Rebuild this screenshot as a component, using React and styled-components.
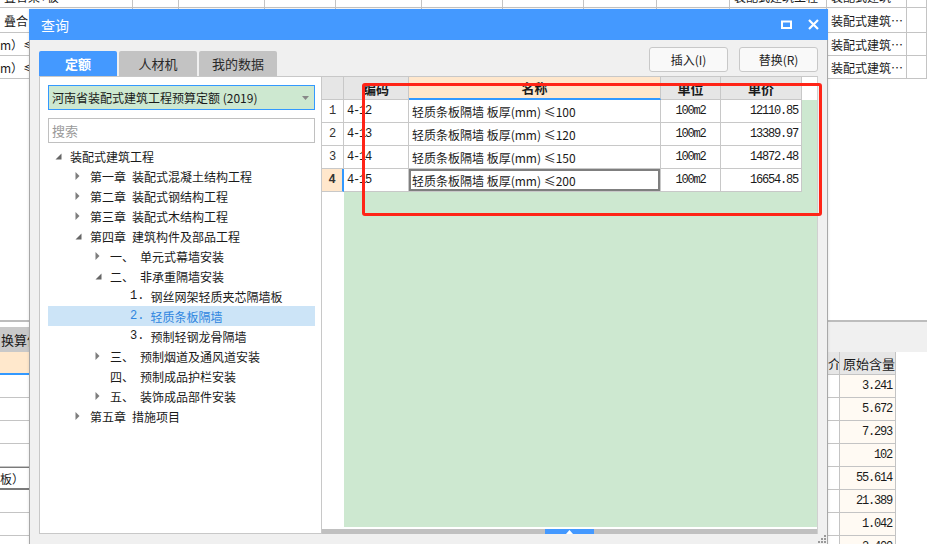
import React from 'react';
import styled, { createGlobalStyle, css } from 'styled-components';

const CJK = `"Noto Sans CJK SC", "Liberation Sans", sans-serif`;
const MONO = `"Liberation Mono", "Noto Sans CJK SC", monospace`;

const GlobalStyle = createGlobalStyle`
  html, body {
    margin: 0;
    padding: 0;
    overflow: hidden;
    background: #fff;
  }
  body {
    font-family: ${CJK};
    font-size: 12px;
    color: #1a1a1a;
  }
  * {
    box-sizing: border-box;
  }
`;

// half-width digits in the source look like a narrow bitmap mono face
const monoText = css`
  font-family: ${MONO};
  font-size: 12px;
  letter-spacing: -1.2px;
`;

const Page = styled.div`
  position: relative;
  width: 927px;
  height: 544px;
  overflow: hidden;
  background: #fff;
  display: flex;
  flex-direction: column;
`;

/* ---------- background sheet ---------- */

const Sheet = styled.div`
  margin-top: -15px;
  display: flex;
  flex-direction: column;
`;

const SheetRow = styled.div`
  display: flex;
  height: ${p => p.$h}px;
  border-bottom: 1px solid #c4c4c4;
`;

const SheetCell = styled.div`
  width: ${p => p.$w}px;
  flex: none;
  border-right: 1px solid #c4c4c4;
  padding: 0 ${p => (p.$pad === undefined ? 3 : p.$pad)}px;
  display: flex;
  align-items: center;
  justify-content: ${p => (p.$right ? 'flex-end' : 'flex-start')};
  white-space: nowrap;
  overflow: hidden;
  ${p => p.$mono && monoText}
`;

const Bottom = styled.div`
  margin-top: auto;
  height: 224px;
  display: flex;
  justify-content: space-between;
`;

const LeftPane = styled.div`
  width: 160px;
  border-top: 2px solid #bdbdbd;
  padding-top: 5px;
  display: flex;
  flex-direction: column;
`;

const PaneHead = styled.div`
  height: 25px;
  background: #c9c9c9;
  display: flex;
  align-items: center;
  padding-left: 1px;
  font-size: 13px;
  white-space: nowrap;
`;

const PaneRow = styled.div`
  height: ${p => p.$h || 23}px;
  flex: none;
  display: flex;
  align-items: center;
  white-space: nowrap;
  font-size: 12px;
  background: ${p => (p.$current ? '#ffe8cc' : '#fff')};
  border-bottom: ${p =>
    p.$current ? '2px solid #3399ff' : p.$focus ? '2px solid #7a7a7a' : '1px solid #c4c4c4'};
  ${p => p.$focus && css`border-top: 1px solid #7a7a7a;`}
`;

const RightPane = styled.div`
  width: 99px;
  border-top: 2px solid #bdbdbd;
  display: flex;
  flex-direction: column;
`;

const PaneTools = styled.div`
  height: 30px;
  flex: none;
  background: #f0f0f0;
`;

const ValueRow = styled.div`
  display: flex;
  height: 23px;
  flex: none;
`;

const ValueCell = styled.div`
  width: ${p => p.$w}px;
  flex: none;
  display: flex;
  align-items: center;
  justify-content: ${p => (p.$right ? 'flex-end' : 'flex-start')};
  padding: 0 3px;
  white-space: nowrap;
  overflow: hidden;
  background: ${p => (p.$head ? '#e6e6e6' : p.$cream ? '#fffaf3' : '#fff')};
  border-right: 1px solid #c4c4c4;
  border-bottom: 1px solid #c4c4c4;
  font-size: ${p => (p.$head ? 13 : 12)}px;
  ${p => p.$mono && monoText}
`;

/* ---------- dialog ---------- */

const Dialog = styled.div`
  position: absolute;
  left: 29px;
  top: 9px;
  width: 799px;
  height: 537px;
  background: #f0f0f0;
  border: 1px solid #a8a8a8;
  border-top: none;
  display: flex;
  flex-direction: column;
  box-shadow: 0 0 3px rgba(0, 0, 0, 0.12);
`;

const TitleBar = styled.div`
  height: 31px;
  flex: none;
  margin: 0 -1px;
  background: #4499ff;
  color: #fff;
  display: flex;
  align-items: center;
  justify-content: space-between;
  padding: 0 9px 0 12px;
  font-size: 14px;
`;

const TitleTools = styled.div`
  display: flex;
  align-items: center;
  gap: 16px;
`;

const DialogBody = styled.div`
  flex: 1;
  display: flex;
  flex-direction: column;
  padding: 7px 9px 0 9px;
`;

const TopRow = styled.div`
  height: 29px;
  flex: none;
  display: flex;
  justify-content: space-between;
`;

const Tabs = styled.div`
  display: flex;
  align-self: flex-end;
  gap: 2px;
`;

const Tab = styled.div`
  width: 78px;
  height: 25px;
  display: flex;
  align-items: center;
  justify-content: center;
  border-radius: 2px 2px 0 0;
  font-size: 13px;
  background: ${p => (p.$active ? '#4499ff' : '#c3c3c3')};
  color: ${p => (p.$active ? '#fff' : '#2a2a2a')};
  font-weight: ${p => (p.$active ? 'bold' : 'normal')};
`;

const Actions = styled.div`
  display: flex;
  gap: 11px;
`;

const ActionButton = styled.button`
  width: 79px;
  height: 25px;
  padding: 0;
  border: 1px solid #c8c8c8;
  border-radius: 3px;
  background: #f9f9f9;
  color: #222;
  font-family: ${CJK};
  font-size: 12px;
`;

const Content = styled.div`
  height: 458px;
  flex: none;
  display: flex;
`;

const TreePanel = styled.div`
  width: 283px;
  flex: none;
  background: #fff;
  border: 1px solid #c8c8c8;
  padding: 8px 6px 0 8px;
  display: flex;
  flex-direction: column;
`;

const Select = styled.div`
  height: 25px;
  border: 1px solid #3399ff;
  background: #cde8d0;
  display: flex;
  align-items: center;
  justify-content: space-between;
  padding: 0 5px 0 3px;
  white-space: nowrap;
  font-size: 12px;
`;

const Search = styled.div`
  margin-top: 8px;
  height: 25px;
  border: 1px solid #c0c0c0;
  background: #fff;
  display: flex;
  align-items: center;
  padding-left: 3px;
  color: #9a9a9a;
  font-size: 13px;
`;

const Tree = styled.div`
  margin-top: 3px;
  display: flex;
  flex-direction: column;
`;

const TreeRow = styled.div`
  height: 20px;
  display: flex;
  align-items: center;
  padding-left: ${p => 6 + p.$level * 20}px;
  white-space: nowrap;
  font-size: 12px;
  background: ${p => (p.$selected ? '#cce4f7' : 'transparent')};
  color: ${p => (p.$selected ? '#2f86e0' : '#1a1a1a')};
`;

const Toggle = styled.span`
  width: 16px;
  flex: none;
  display: flex;
  align-items: center;
  padding-left: 1px;
`;

const Prefix = styled.span`
  margin-right: 6px;
  ${p => p.$mono && css`
    font-family: ${MONO};
    font-size: 12px;
  `}
`;

const Grid = styled.div`
  width: 496px;
  flex: none;
  background: #fff;
  border-top: 1px solid #c8c8c8;
  border-right: 1px solid #d0d0d0;
  display: flex;
  flex-direction: column;
`;

const GridRow = styled.div`
  display: flex;
  height: 23px;
  flex: none;
`;

const HeadCell = styled.div`
  width: ${p => p.$w}px;
  flex: none;
  display: flex;
  align-items: center;
  justify-content: center;
  font-weight: bold;
  font-size: 13px;
  background: ${p => (p.$active ? '#ffe7cc' : '#e6e6e6')};
  border-right: 1px solid #c8c8c8;
  border-bottom: ${p => (p.$active ? '2px solid #3399ff' : '1px solid #c8c8c8')};
`;

const HeadFiller = styled.div`
  flex: 1;
  background: #fff;
`;

const RowNo = styled.div`
  width: 22px;
  flex: none;
  display: flex;
  align-items: center;
  justify-content: center;
  ${monoText}
  letter-spacing: 0;
  color: #333;
  background: ${p => (p.$current ? '#ffe7cc' : '#fff')};
  font-weight: ${p => (p.$current ? 'bold' : 'normal')};
  border-bottom: 1px solid #c8c8c8;
  border-right: ${p => (p.$current ? '2px solid #3399ff' : '1px solid #c8c8c8')};
`;

const Cell = styled.div`
  width: ${p => p.$w}px;
  flex: none;
  display: flex;
  align-items: center;
  justify-content: ${p =>
    p.$align === 'right' ? 'flex-end' : p.$align === 'center' ? 'center' : 'flex-start'};
  padding: 0 3px;
  white-space: nowrap;
  overflow: hidden;
  background: #fff;
  border-right: 1px solid #c8c8c8;
  border-bottom: 1px solid #c8c8c8;
  font-size: 12px;
  ${p => p.$mono && monoText}
  ${p => p.$selected && css`box-shadow: inset 0 0 0 2px #7f7f7f;`}
`;

const GreenFiller = styled.div`
  flex: 1;
  background: #cde8d0;
`;

const GridFill = styled.div`
  flex: 1;
  display: flex;
`;

const RowNoFill = styled.div`
  width: 22px;
  flex: none;
  background: #fff;
`;

const ScrollGap = styled.div`
  height: 2px;
  flex: none;
  background: #fff;
`;

const ScrollBar = styled.div`
  height: 5px;
  flex: none;
  background: #c0c0c0;
  display: flex;
  padding-left: 223px;
`;

const ScrollThumb = styled.div`
  width: 49px;
  height: 5px;
  background: #4499ff;
  display: flex;
  align-items: center;
  justify-content: center;
`;

const Grip = styled.svg`
  position: absolute;
  right: 1px;
  bottom: 2px;
`;

const RedMark = styled.div`
  position: absolute;
  left: 362px;
  top: 83px;
  width: 460px;
  height: 133px;
  border: 3px solid #ff2417;
  border-radius: 3px;
  pointer-events: none;
`;

/* ---------- data ---------- */

const sheetCols = [133, 46, 86, 71, 86, 81, 81, 73, 73, 97, 80, 20];

const sheetRows = [
  {
    h: 23,
    cells: ['叠合梁+板', '10m3', '', '', '0', '1310.41', '0', '1143.4', '0', '装配式建筑工程', '装配式建筑', ''],
  },
  { h: 25, cells: ['叠合', '', '', '', '', '', '', '', '', '', '装配式建筑…', ''] },
  { h: 23, cells: ['m）≤', '', '', '', '', '', '', '', '', '', '装配式建筑…', ''] },
  { h: 23, cells: ['m）≤', '', '', '', '', '', '', '', '', '', '装配式建筑…', ''] },
];

const numeric = v => /^[0-9.m]+$/.test(v);

const tree = [
  { level: 0, toggle: 'open', text: '装配式建筑工程' },
  { level: 1, toggle: 'closed', prefix: '第一章', text: '装配式混凝土结构工程' },
  { level: 1, toggle: 'closed', prefix: '第二章', text: '装配式钢结构工程' },
  { level: 1, toggle: 'closed', prefix: '第三章', text: '装配式木结构工程' },
  { level: 1, toggle: 'open', prefix: '第四章', text: '建筑构件及部品工程' },
  { level: 2, toggle: 'closed', prefix: '一、', text: '单元式幕墙安装' },
  { level: 2, toggle: 'open', prefix: '二、', text: '非承重隔墙安装' },
  { level: 3, prefix: '1.', num: true, text: '钢丝网架轻质夹芯隔墙板' },
  { level: 3, prefix: '2.', num: true, text: '轻质条板隔墙', selected: true },
  { level: 3, prefix: '3.', num: true, text: '预制轻钢龙骨隔墙' },
  { level: 2, toggle: 'closed', prefix: '三、', text: '预制烟道及通风道安装' },
  { level: 2, prefix: '四、', text: '预制成品护栏安装' },
  { level: 2, toggle: 'closed', prefix: '五、', text: '装饰成品部件安装' },
  { level: 1, toggle: 'closed', prefix: '第五章', text: '措施项目' },
];

const gridCols = [
  { key: 'code', title: '编码', w: 65, mono: true },
  { key: 'name', title: '名称', w: 252, active: true },
  { key: 'unit', title: '单位', w: 60, mono: true, align: 'center' },
  { key: 'price', title: '单价', w: 81, mono: true, align: 'right' },
];

const quotas = [
  { no: 1, code: '4-12', name: '轻质条板隔墙\u00a0板厚(mm)\u00a0≤100', unit: '100m2', price: '12110.85' },
  { no: 2, code: '4-13', name: '轻质条板隔墙\u00a0板厚(mm)\u00a0≤120', unit: '100m2', price: '13389.97' },
  { no: 3, code: '4-14', name: '轻质条板隔墙\u00a0板厚(mm)\u00a0≤150', unit: '100m2', price: '14872.48' },
  { no: 4, code: '4-15', name: '轻质条板隔墙\u00a0板厚(mm)\u00a0≤200', unit: '100m2', price: '16654.85', current: true },
];

const amounts = ['3.241', '5.672', '7.293', '102', '55.614', '21.389', '1.042', '2.400'];

/* ---------- icons ---------- */

const OpenArrow = () => (
  <svg width="7" height="7" viewBox="0 0 7 7">
    <path d="M6.5 0.5 V6.5 H0.5 Z" fill="#666" />
  </svg>
);

const ClosedArrow = () => (
  <svg width="5" height="8" viewBox="0 0 5 8">
    <path d="M0.5 0 L4.5 4 L0.5 8 Z" fill="#7d7d7d" />
  </svg>
);

const MaxIcon = () => (
  <svg width="11" height="9" viewBox="0 0 11 9">
    <rect x="1" y="1.5" width="9" height="6.5" fill="none" stroke="#fff" strokeWidth="2" />
  </svg>
);

const CloseIcon = () => (
  <svg width="11" height="11" viewBox="0 0 11 11">
    <path d="M1 1 L10 10 M10 1 L1 10" stroke="#fff" strokeWidth="2.2" />
  </svg>
);

const App = () => {
  return (
    <Page>
      <GlobalStyle />

      <Sheet>
        {sheetRows.map((row, r) => (
          <SheetRow key={r} $h={row.h}>
            {row.cells.map((text, c) => (
              <SheetCell
                key={c}
                $w={sheetCols[c]}
                $pad={c === 0 && r > 1 ? 0 : 4}
                $right={c > 1 && c < 9}
                $mono={numeric(text)}
              >
                {text}
              </SheetCell>
            ))}
          </SheetRow>
        ))}
      </Sheet>

      <Bottom>
        <LeftPane>
          <PaneHead>换算信息</PaneHead>
          <PaneRow $h={23} $current />
          <PaneRow />
          <PaneRow />
          <PaneRow />
          <PaneRow />
          <PaneRow $focus>板）</PaneRow>
          <PaneRow />
          <PaneRow />
        </LeftPane>

        <RightPane>
          <PaneTools />
          <ValueRow>
            <ValueCell $w={12} $head style={{ padding: 0 }}>介</ValueCell>
            <ValueCell $w={56} $head>原始含量</ValueCell>
          </ValueRow>
          {amounts.map(v => (
            <ValueRow key={v}>
              <ValueCell $w={12} />
              <ValueCell $w={56} $cream $right $mono>
                {v}
              </ValueCell>
            </ValueRow>
          ))}
        </RightPane>
      </Bottom>

      <Dialog>
        <TitleBar>
          <span>查询</span>
          <TitleTools>
            <MaxIcon />
            <CloseIcon />
          </TitleTools>
        </TitleBar>

        <DialogBody>
          <TopRow>
            <Tabs>
              <Tab $active>定额</Tab>
              <Tab>人材机</Tab>
              <Tab>我的数据</Tab>
            </Tabs>
            <Actions>
              <ActionButton>插入(I)</ActionButton>
              <ActionButton>替换(R)</ActionButton>
            </Actions>
          </TopRow>

          <Content>
            <TreePanel>
              <Select>
                <span>河南省装配式建筑工程预算定额 (2019)</span>
                <svg width="7" height="4" viewBox="0 0 7 4">
                  <path d="M0 0 H7 L3.5 4 Z" fill="#888" />
                </svg>
              </Select>
              <Search>搜索</Search>
              <Tree>
                {tree.map((item, i) => (
                  <TreeRow key={i} $level={item.level} $selected={item.selected}>
                    <Toggle>
                      {item.toggle === 'open' && <OpenArrow />}
                      {item.toggle === 'closed' && <ClosedArrow />}
                    </Toggle>
                    {item.prefix && <Prefix $mono={item.num}>{item.prefix}</Prefix>}
                    <span>{item.text}</span>
                  </TreeRow>
                ))}
              </Tree>
            </TreePanel>

            <Grid>
              <GridRow>
                <HeadCell $w={22} />
                {gridCols.map(col => (
                  <HeadCell key={col.key} $w={col.w} $active={col.active}>
                    {col.title}
                  </HeadCell>
                ))}
                <HeadFiller />
              </GridRow>

              {quotas.map(row => (
                <GridRow key={row.no}>
                  <RowNo $current={row.current}>{row.no}</RowNo>
                  {gridCols.map(col => (
                    <Cell
                      key={col.key}
                      $w={col.w}
                      $mono={col.mono}
                      $align={col.align}
                      $selected={row.current && col.key === 'name'}
                    >
                      {row[col.key]}
                    </Cell>
                  ))}
                  <GreenFiller />
                </GridRow>
              ))}

              <GridFill>
                <RowNoFill />
                <GreenFiller />
              </GridFill>
              <ScrollGap />
              <ScrollBar>
                <ScrollThumb>
                  <svg width="7" height="4" viewBox="0 0 7 4">
                    <path d="M0 4 L3.5 0 L7 4 Z" fill="#fff" />
                  </svg>
                </ScrollThumb>
              </ScrollBar>
            </Grid>
          </Content>
        </DialogBody>

        <Grip width="8" height="8" viewBox="0 0 8 8">
          <rect x="6" y="0" width="2" height="2" fill="#999" />
          <rect x="3" y="3" width="2" height="2" fill="#999" />
          <rect x="6" y="3" width="2" height="2" fill="#999" />
          <rect x="0" y="6" width="2" height="2" fill="#999" />
          <rect x="3" y="6" width="2" height="2" fill="#999" />
          <rect x="6" y="6" width="2" height="2" fill="#999" />
        </Grip>
      </Dialog>

      <RedMark />
    </Page>
  );
};

export default App;
